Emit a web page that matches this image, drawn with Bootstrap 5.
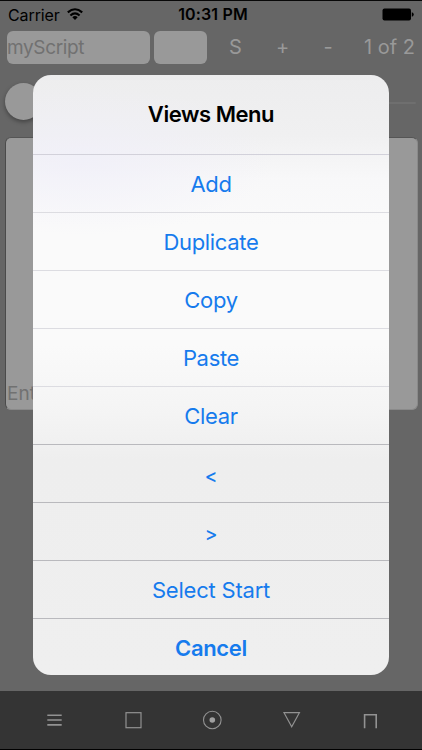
<!DOCTYPE html>
<html lang="en">
<head>
<meta charset="utf-8">
<meta name="viewport" content="width=device-width, initial-scale=1">
<title>Views Menu</title>
<link href="https://cdn.jsdelivr.net/npm/bootstrap@5.3.0/dist/css/bootstrap.min.css" rel="stylesheet">
<style>
body{font-family:Inter,"Liberation Sans",sans-serif;background:#666;color:#000}
.screen{width:422px;height:750px;border-top:1px solid #080808;border-bottom:1px solid #000}
.status{height:28px;padding:0 8px;font-size:16px;line-height:27px}
.status .carrier{letter-spacing:-.1px}
.status .clock{left:4px;right:0;top:0;letter-spacing:.15px}
.status .battery,.status .wifi{margin-bottom:2px}
.tools{height:34px;padding:2px 7px 0;color:#999;font-size:20px}
.field{height:33px;flex:none;border-radius:6px;background:#999;color:#717171;font-size:19px;line-height:34px;letter-spacing:-.35px}
.field-name{width:143px}
.field-num{width:53px;margin-left:4px}
.tool{line-height:33px;text-align:center}
.tool-s{width:57px}
.tool-plus{width:37px}
.tool-minus{width:54px}
.slider-row{height:74px;padding:20px 6px 0 5px}
.knob{width:37px;height:37px;border-radius:50%;background:#999;box-shadow:0 2px 4px rgba(0,0,0,.35)}
.track{height:2px;background:#6f6f6f;border-radius:2px;margin-top:19px}
.editor{height:273px;margin:0 4px 0 5px;border:1px solid #8a8a8a;border-left-color:#4b4b4b;border-top-color:#555;border-radius:6px;background:#999;color:#717171;font-size:19px;padding:0 0 3px 1px;line-height:24px}
.bottombar{height:58px;background:#343434}
.alert-sheet{left:33px;top:74px;width:356px;height:600px;border-radius:18px;background:radial-gradient(ellipse 190px 75px at 50px 85px,rgba(240,239,249,.8),rgba(245,244,250,0)),linear-gradient(#ededee 0,#f0f0f1 60px,#f8f8f9 105px,#fafafa 150px,#fafafa 270px,#f4f4f4 340px,#eee 385px,#efefef 100%)}
.sheet-title{height:79px;font-size:22px;font-weight:600;line-height:79px;letter-spacing:-.45px}
.choice{height:58.06px;flex:none;border:0;border-top:1px solid #dcdce1;background:transparent;color:#167bed;font-size:22px;line-height:57px;letter-spacing:-.32px;padding:1px 0 0;text-align:center;white-space:nowrap}
.choice.first{border-top-color:#d2d1da}
.choice.strong{border-top-color:#b9b9bd}
.choice.wide{letter-spacing:-.2px}
.choice.arrow{font-size:19px;font-weight:500;padding-top:3px}
.choice.cancel{height:56px;font-weight:600}
</style>
<script src="https://cdn.jsdelivr.net/npm/bootstrap@5.3.0/dist/js/bootstrap.bundle.min.js"></script>
</head>
<body class="overflow-hidden">
<div class="screen position-relative d-flex flex-column overflow-hidden">
  <header class="status position-relative d-flex align-items-center justify-content-between">
    <div class="d-flex align-items-center"><span class="carrier">Carrier</span>
      <svg class="wifi" style="margin-left:7px" width="16" height="13" viewBox="0 0 16 13" fill="none" stroke="#000" stroke-width="2.1"><path d="M.8 4.4Q8-1.9 15.2 4.4M3.4 7.5Q8 3.4 12.6 7.5"/><path d="M8 12 5.3 9.2Q8 7 10.7 9.2Z" fill="#000" stroke="none"/></svg>
    </div>
    <span class="clock position-absolute text-center fw-semibold">10:31 PM</span>
    <svg class="battery" width="32" height="13" viewBox="0 0 32 13"><rect x=".5" y=".5" width="28.5" height="12" rx="2"/><path d="M29.8 4.2Q31.7 4.7 31.7 6.5T29.8 8.8Z"/></svg>
  </header>
  <div class="tools d-flex">
    <div class="field field-name">myScript</div>
    <div class="field field-num"></div>
    <div class="tool tool-s">S</div>
    <div class="tool tool-plus">+</div>
    <div class="tool tool-minus">-</div>
    <div class="tool ms-auto text-nowrap">1 of 2</div>
  </div>
  <div class="slider-row d-flex"><div class="knob"></div><div class="track flex-grow-1"></div></div>
  <div class="editor d-flex align-items-end">Enter text</div>
  <nav class="bottombar mt-auto">
    <svg class="d-block" width="422" height="58" viewBox="0 0 422 58" fill="none" stroke="#929292" stroke-width="1.2">
      <path d="M47.3 24.3h14.4M47.3 29h14.4M47.3 33.9h14.4" stroke-width="1.6"/>
      <rect x="126" y="21.7" width="15" height="15"/>
      <circle cx="212.3" cy="29" r="8.8" stroke-width="1.1"/><circle cx="212.3" cy="29" r="2.8" fill="#a0a0a0" stroke="none"/>
      <path d="M284 21.7h15.4l-7.7 14Z"/>
      <path d="M364.6 37.2V23.8h11.6v13.4" stroke-width="1.6"/>
    </svg>
  </nav>
  <section class="alert-sheet position-absolute overflow-hidden d-flex flex-column">
    <div class="sheet-title text-center">Views Menu</div>
    <button class="choice first">Add</button>
    <button class="choice">Duplicate</button>
    <button class="choice">Copy</button>
    <button class="choice">Paste</button>
    <button class="choice">Clear</button>
    <button class="choice strong arrow">&lt;</button>
    <button class="choice strong arrow">&gt;</button>
    <button class="choice strong wide">Select Start</button>
    <button class="choice strong cancel">Cancel</button>
  </section>
</div>
</body>
</html>
